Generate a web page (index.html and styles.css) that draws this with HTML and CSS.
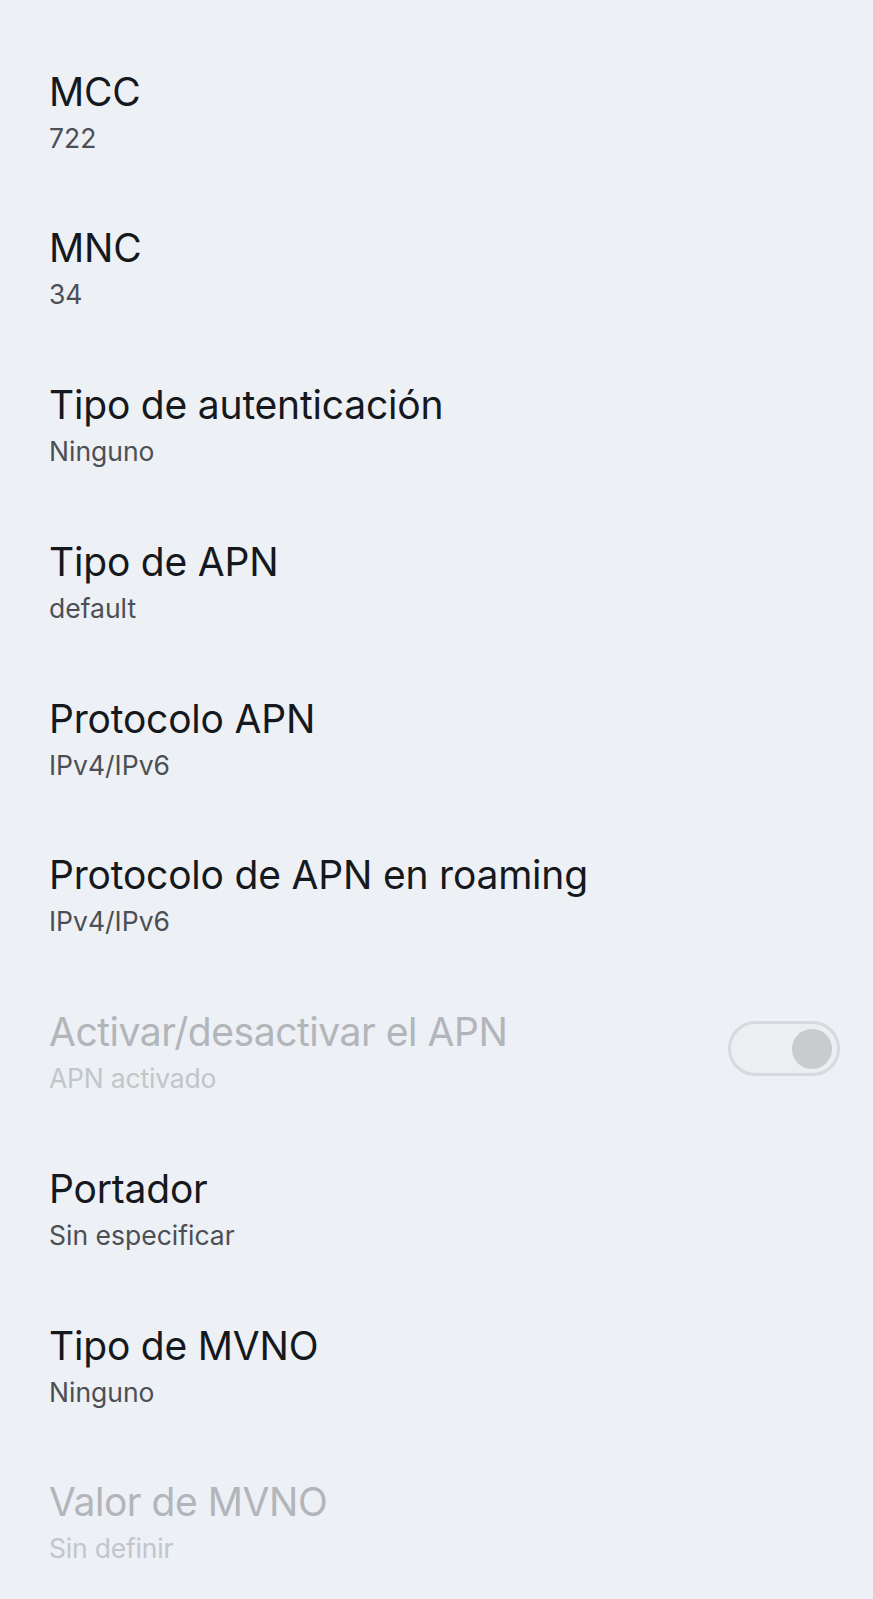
FILE: index.html
```html
<!DOCTYPE html>
<html lang="es">
<head>
    <meta charset="UTF-8">
    <meta name="viewport" content="width=device-width, initial-scale=1.0">
    <title>APN</title>
    <link rel="stylesheet" href="styles.css">
</head>
<body>
    <div class="pref-list">
        <div class="pref">
            <div class="pref-text">
                <div class="pref-title">MCC</div>
                <div class="pref-summary">722</div>
            </div>
        </div>
        <div class="pref">
            <div class="pref-text">
                <div class="pref-title">MNC</div>
                <div class="pref-summary">34</div>
            </div>
        </div>
        <div class="pref">
            <div class="pref-text">
                <div class="pref-title">Tipo de autenticación</div>
                <div class="pref-summary">Ninguno</div>
            </div>
        </div>
        <div class="pref">
            <div class="pref-text">
                <div class="pref-title">Tipo de APN</div>
                <div class="pref-summary">default</div>
            </div>
        </div>
        <div class="pref">
            <div class="pref-text">
                <div class="pref-title">Protocolo APN</div>
                <div class="pref-summary">IPv4/IPv6</div>
            </div>
        </div>
        <div class="pref">
            <div class="pref-text">
                <div class="pref-title">Protocolo de APN en roaming</div>
                <div class="pref-summary">IPv4/IPv6</div>
            </div>
        </div>
        <div class="pref disabled">
            <div class="pref-text">
                <div class="pref-title">Activar/desactivar el APN</div>
                <div class="pref-summary">APN activado</div>
            </div>
            <div class="switch">
                <div class="switch-knob"></div>
            </div>
        </div>
        <div class="pref">
            <div class="pref-text">
                <div class="pref-title">Portador</div>
                <div class="pref-summary">Sin especificar</div>
            </div>
        </div>
        <div class="pref">
            <div class="pref-text">
                <div class="pref-title">Tipo de MVNO</div>
                <div class="pref-summary">Ninguno</div>
            </div>
        </div>
        <div class="pref disabled">
            <div class="pref-text">
                <div class="pref-title">Valor de MVNO</div>
                <div class="pref-summary">Sin definir</div>
            </div>
        </div>
    </div>
    <div class="nav-edge"></div>
</body>
</html>
```

FILE: styles.css
```css
html, body {
    margin: 0;
    padding: 0;
}

body {
    font-family: Inter, "Noto Sans", sans-serif;
    background-color: #edf0f5;
    height: 1599px;
    display: flex;
    flex-direction: column;
    overflow: hidden;
}

.pref-list {
    flex: 1;
    padding-top: 36.5px;
}

.pref {
    display: flex;
    align-items: center;
    padding: 32px 33px 31.75px 49px;
}

.pref-text {
    flex: 1;
}

.pref-title {
    font-size: 39px;
    line-height: 46px;
    letter-spacing: -0.2px;
    color: #15181c;
}

.pref-summary {
    font-size: 26.5px;
    line-height: 47px;
    color: #4c4f54;
}

.pref.disabled .pref-title {
    color: #b2b5ba;
    letter-spacing: -0.45px;
}

.pref.disabled .pref-summary {
    color: #c2c5ca;
    letter-spacing: -0.2px;
}

.switch {
    width: 101px;
    height: 49px;
    border: 3px solid #d6d9dd;
    border-radius: 28px;
    background-color: #eceef1;
    display: flex;
    align-items: center;
    justify-content: flex-end;
    padding-right: 5px;
    box-sizing: content-box;
    margin-bottom: 14px;
}

.switch-knob {
    width: 40px;
    height: 40px;
    border-radius: 50%;
    background-color: #c9cbcf;
}

.nav-edge {
    height: 2px;
    background-color: #d5d8dc;
}
```
